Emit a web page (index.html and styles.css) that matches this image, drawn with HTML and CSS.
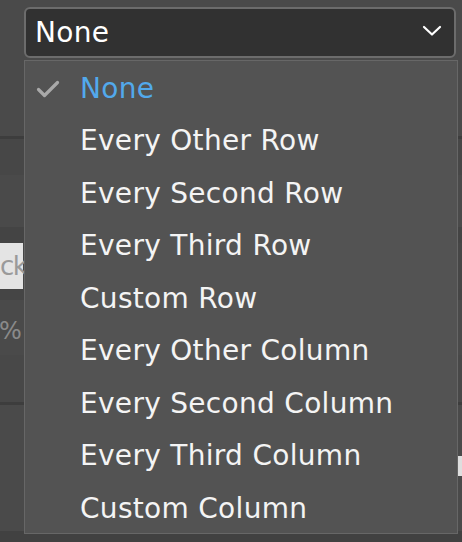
FILE: index.html
```html
<!DOCTYPE html>
<html>
<head>
<meta charset="utf-8">
<link rel="stylesheet" href="styles.css">
</head>
<body>
<div class="page">
  <div class="bg">
    <div class="band b1"></div>
    <div class="band line"></div>
    <div class="band b2"></div>
    <div class="band b3"></div>
    <div class="band b4"></div>
    <div class="band b5"><div class="field"><span>ck</span></div></div>
    <div class="band b6"></div>
    <div class="band b7"><div class="pct"><span>%</span></div></div>
    <div class="band b8"></div>
    <div class="band line"></div>
    <div class="band b9"><div class="rfield"></div></div>
    <div class="band b10"></div>
  </div>
  <div class="dropdown">
    <div class="select">
      <span class="value">None</span>
      <svg class="chev" width="20" height="12" viewBox="0 0 20 12"><path d="M2 2 L10 9.5 L18 2" fill="none" stroke="#ffffff" stroke-width="2.2" stroke-linecap="round" stroke-linejoin="round"/></svg>
    </div>
    <ul class="menu">
      <li class="item selected">
        <svg class="check" width="24" height="18" viewBox="0 0 24 18"><path d="M2.5 9.5 L8.5 15.5 L21.5 2.5" fill="none" stroke="#a9a9a9" stroke-width="3.2" stroke-linecap="round" stroke-linejoin="round"/></svg>
        <span>None</span>
      </li>
      <li class="item"><span>Every Other Row</span></li>
      <li class="item"><span>Every Second Row</span></li>
      <li class="item"><span>Every Third Row</span></li>
      <li class="item"><span>Custom Row</span></li>
      <li class="item"><span>Every Other Column</span></li>
      <li class="item"><span>Every Second Column</span></li>
      <li class="item"><span>Every Third Column</span></li>
      <li class="item"><span>Custom Column</span></li>
    </ul>
  </div>
</div>
</body>
</html>
```

FILE: styles.css
```css
html, body {
  margin: 0;
  padding: 0;
}
body {
  background: #4a4a4a;
  font-family: "DejaVu Sans", "Open Sans", sans-serif;
  overflow: hidden;
}
.page {
  position: relative;
  width: 462px;
  height: 542px;
  overflow: hidden;
}
.bg {
  display: flex;
  flex-direction: column;
}
.band { width: 100%; position: relative; }
.b1 { height: 136px; background: #4a4a4a; }
.line { height: 3px; background: #3d3d3d; }
.b2 { height: 36px; background: #474747; }
.b3 { height: 52px; background: #4a4a4a; }
.b4 { height: 16px; background: #444444; }
.b5 { height: 46px; background: #464646; display: flex; }
.field {
  width: 23px;
  height: 46px;
  background: #e4e4e4;
  display: flex;
  align-items: center;
}
.field span {
  color: #9a9a9a;
  font-size: 26px;
  white-space: nowrap;
  margin-left: 0;
  letter-spacing: -1.5px;
}
.b6 { height: 11px; background: #454545; }
.b7 { height: 55px; background: #4a4a4a; display: flex; }
.pct {
  width: 16px;
  display: flex;
  align-items: center;
}
.pct span {
  color: #8a8a8a;
  font-size: 24px;
  white-space: nowrap;
  margin-top: 6px;
  margin-left: -1px;
}
.b8 { height: 47px; background: #484848; }
.b9 { height: 126px; background: #4a4a4a; display: flex; justify-content: flex-end; }
.rfield {
  width: 5px;
  height: 20px;
  margin-top: 51px;
  background: #dedede;
}
.b10 { height: 12px; background: #414141; }

.dropdown {
  position: absolute;
  left: 24px;
  top: 7px;
  width: 434px;
}
.select {
  box-sizing: border-box;
  width: 432px;
  height: 51px;
  background: #313131;
  border: 2px solid #6c6c6c;
  border-radius: 6px;
  display: flex;
  align-items: center;
  justify-content: space-between;
  padding: 0 12px 0 9px;
}
.value {
  color: #ffffff;
  font-size: 28px;
  line-height: 1;
  margin-top: 1px;
  letter-spacing: 0.3px;
}
.chev { display: block; margin-top: -4px; }
.menu {
  list-style: none;
  margin: 2px 0 0 0;
  padding: 1px 0 0 0;
  box-sizing: border-box;
  width: 434px;
  height: 474px;
  background: #535353;
  border: 1px solid #676767;
}
.item {
  height: 52.5px;
  display: flex;
  align-items: center;
  padding-left: 55px;
  position: relative;
  color: #f4f4f4;
  font-size: 28px;
  letter-spacing: 0.3px;
  white-space: nowrap;
}
.item.selected span { color: #52a9ec; }
.check {
  position: absolute;
  left: 11px;
  top: 18px;
}
```
